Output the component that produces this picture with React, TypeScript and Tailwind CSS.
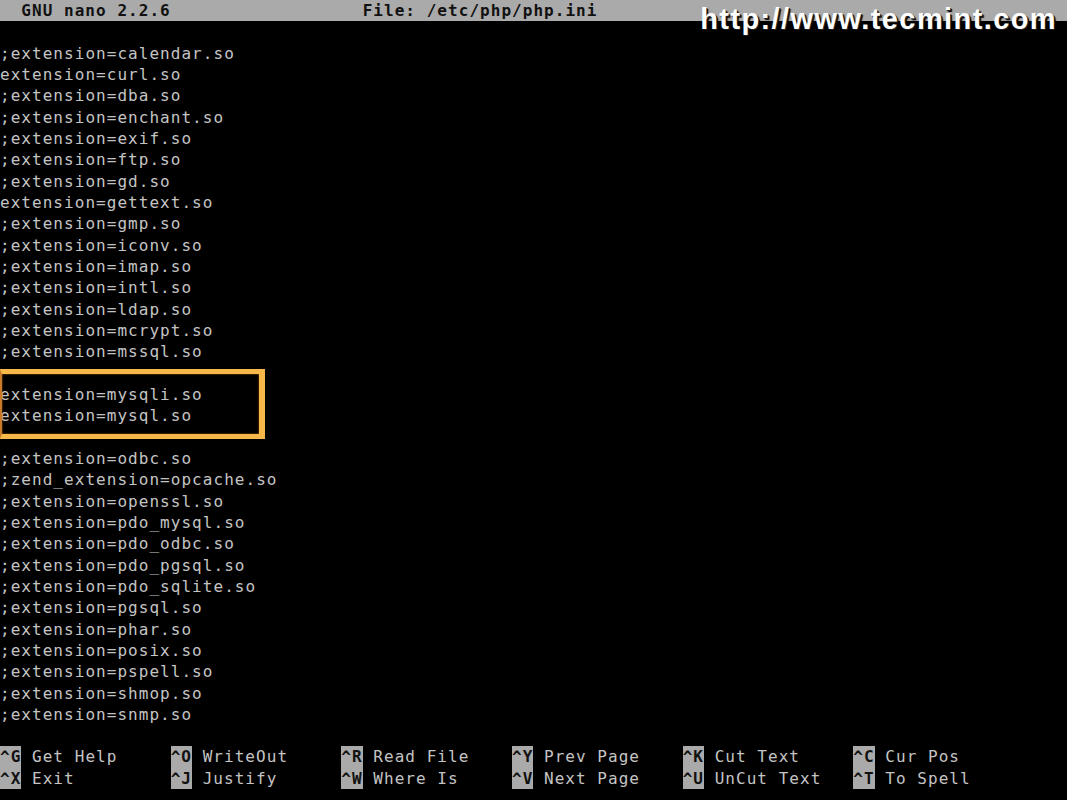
import React from "react";

const lines: string[] = [
  "",
  ";extension=calendar.so",
  "extension=curl.so",
  ";extension=dba.so",
  ";extension=enchant.so",
  ";extension=exif.so",
  ";extension=ftp.so",
  ";extension=gd.so",
  "extension=gettext.so",
  ";extension=gmp.so",
  ";extension=iconv.so",
  ";extension=imap.so",
  ";extension=intl.so",
  ";extension=ldap.so",
  ";extension=mcrypt.so",
  ";extension=mssql.so",
  "",
  "extension=mysqli.so",
  "extension=mysql.so",
  "",
  ";extension=odbc.so",
  ";zend_extension=opcache.so",
  ";extension=openssl.so",
  ";extension=pdo_mysql.so",
  ";extension=pdo_odbc.so",
  ";extension=pdo_pgsql.so",
  ";extension=pdo_sqlite.so",
  ";extension=pgsql.so",
  ";extension=phar.so",
  ";extension=posix.so",
  ";extension=pspell.so",
  ";extension=shmop.so",
  ";extension=snmp.so",
  "",
];

const shortcuts: [string, string][][] = [
  [
    ["^G", "Get Help"],
    ["^O", "WriteOut"],
    ["^R", "Read File"],
    ["^Y", "Prev Page"],
    ["^K", "Cut Text"],
    ["^C", "Cur Pos"],
  ],
  [
    ["^X", "Exit"],
    ["^J", "Justify"],
    ["^W", "Where Is"],
    ["^V", "Next Page"],
    ["^U", "UnCut Text"],
    ["^T", "To Spell"],
  ],
];

export default function App() {
  return (
    <div
      className="relative w-[1067px] h-[800px] overflow-hidden bg-black text-[#c4c4c4] text-[16px] tracking-[1.04px] leading-[21.333px] whitespace-pre"
      style={{ fontFamily: '"DejaVu Sans Mono", monospace' }}
    >
      <div className="flex flex-col">
        {/* title bar */}
        <div className="h-[21.333px] bg-[#aaaaaa] text-[#111] font-bold flex">
          <span className="w-[341.33px] pl-[21.33px]">GNU nano 2.2.6</span>
          <span className="pl-[21.33px]">File: /etc/php/php.ini</span>
        </div>
        {lines.map((l, i) => (
          <div key={i} className="h-[21.333px]">
            {l}
          </div>
        ))}
        {shortcuts.map((row, r) => (
          <div key={r} className="h-[21.333px] flex">
            {row.map(([k, label], c) => (
              <div key={c} className="w-[170.67px] flex">
                <span className="bg-[#aaaaaa] text-[#111] font-bold">{k}</span>
                <span className="pl-[10.67px]">{label}</span>
              </div>
            ))}
          </div>
        ))}
      </div>

      {/* highlight box */}
      <div className="absolute left-0 top-[369px] w-[265px] h-[70px] border-t-[5px] border-b-[5px] border-r-[6px] border-l-[2px] border-t-[#f6b848] border-b-[#f6b848] border-r-[#f6b848] border-l-[#c87a2a] shadow-[inset_0_0_2px_#c06818]" />

      {/* watermark */}
      <div
        className="absolute right-[10px] top-[5px] text-white font-bold text-[29px] leading-[29px] tracking-[1.4px]"
        style={{
          fontFamily: '"Liberation Sans", Arial, sans-serif',
          textShadow: "1px 1px 0 #222, 2px 2px 1px #000",
        }}
      >
        http://www.tecmint.com
      </div>
    </div>
  );
}
